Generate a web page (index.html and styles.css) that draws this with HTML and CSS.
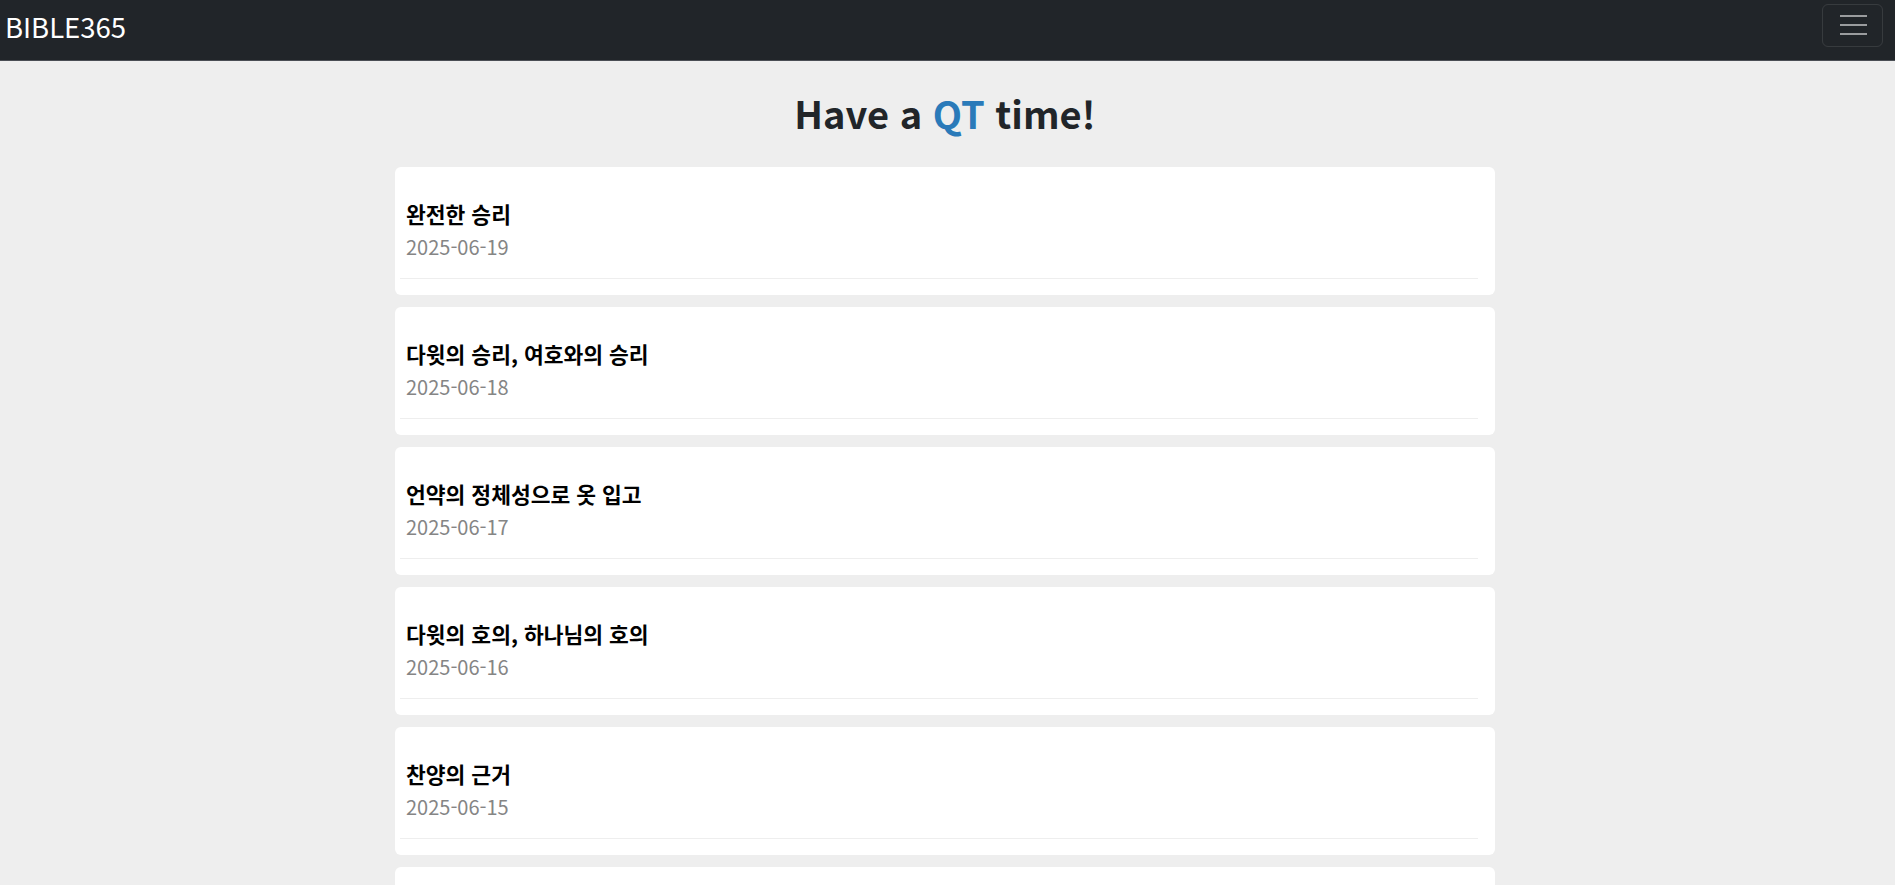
FILE: index.html
```html
<!DOCTYPE html>
<html lang="ko">
<head>
<meta charset="utf-8">
<title>BIBLE365</title>
<link rel="stylesheet" href="styles.css">
</head>
<body>
<nav class="navbar">
  <a class="brand" href="#">BIBLE365</a>
  <button class="toggler" type="button" aria-label="Toggle navigation">
    <svg width="27" height="20" viewBox="0 0 27 20" aria-hidden="true">
      <path d="M0 1h27M0 10h27M0 19h27" stroke="rgba(255,255,255,0.55)" stroke-width="2" fill="none"/>
    </svg>
  </button>
</nav>
<main class="main">
  <h1 class="headline">Have a <span class="accent">QT</span> time!</h1>
  <ul class="qt-list">
    <li class="card">
      <div class="card-body">
        <h5 class="card-title">완전한 승리</h5>
        <p class="card-date">2025-06-19</p>
      </div>
      <hr class="divider">
    </li>
    <li class="card">
      <div class="card-body">
        <h5 class="card-title">다윗의 승리, 여호와의 승리</h5>
        <p class="card-date">2025-06-18</p>
      </div>
      <hr class="divider">
    </li>
    <li class="card">
      <div class="card-body">
        <h5 class="card-title">언약의 정체성으로 옷 입고</h5>
        <p class="card-date">2025-06-17</p>
      </div>
      <hr class="divider">
    </li>
    <li class="card">
      <div class="card-body">
        <h5 class="card-title">다윗의 호의, 하나님의 호의</h5>
        <p class="card-date">2025-06-16</p>
      </div>
      <hr class="divider">
    </li>
    <li class="card">
      <div class="card-body">
        <h5 class="card-title">찬양의 근거</h5>
        <p class="card-date">2025-06-15</p>
      </div>
      <hr class="divider">
    </li>
    <li class="card">
      <div class="card-body">
        <h5 class="card-title">하나님의 때</h5>
        <p class="card-date">2025-06-14</p>
      </div>
      <hr class="divider">
    </li>
  </ul>
</main>
</body>
</html>
```
FILE: styles.css
```css
* { box-sizing: border-box; }
html, body {
  margin: 0;
  padding: 0;
}
body {
  background: #eeeeee;
  font-family: "Noto Sans CJK KR", "Noto Sans", sans-serif;
  color: #212529;
}
.navbar {
  height: 61px;
  background: #212529;
  border-bottom: 1px solid #4a4e54;
  display: flex;
  align-items: center;
  justify-content: space-between;
  padding: 0 12px 0 5px;
}
.brand {
  color: #ffffff;
  text-decoration: none;
  font-size: 27.5px;
  line-height: 1;
  margin-top: -6px;
}
.toggler {
  width: 61px;
  height: 43px;
  margin-top: -10px;
  background: transparent;
  border: 1px solid rgba(255,255,255,0.1);
  border-radius: 6px;
  display: flex;
  align-items: center;
  justify-content: center;
  padding: 0;
}
.toggler svg { display: block; margin-left: 2px; }
.main {
  padding-top: 29px;
  padding-right: 5px;
}
.headline {
  margin: 0;
  text-align: center;
  font-size: 38px;
  line-height: 45.6px;
  font-weight: 700;
  color: #212529;
}
.accent { color: #2a7ab9; }
.qt-list {
  list-style: none;
  margin: 31px auto 0;
  padding: 0;
  width: 1100px;
  display: flex;
  flex-direction: column;
  gap: 12px;
}
.card {
  background: #ffffff;
  border-radius: 6px;
  height: 128px;
  padding: 35px 17px 0 5px;
}
.card-body {
  padding-left: 6px;
}
.card-title {
  margin: 0;
  font-size: 21.5px;
  line-height: 24px;
  font-weight: 700;
  color: #000000;
}
.card-date {
  margin: 8px 0 0;
  font-size: 20px;
  line-height: 26px;
  color: #858585;
}
.divider {
  margin: 18px 0 0;
  border: 0;
  border-top: 1px solid #eeeeee;
}
```
